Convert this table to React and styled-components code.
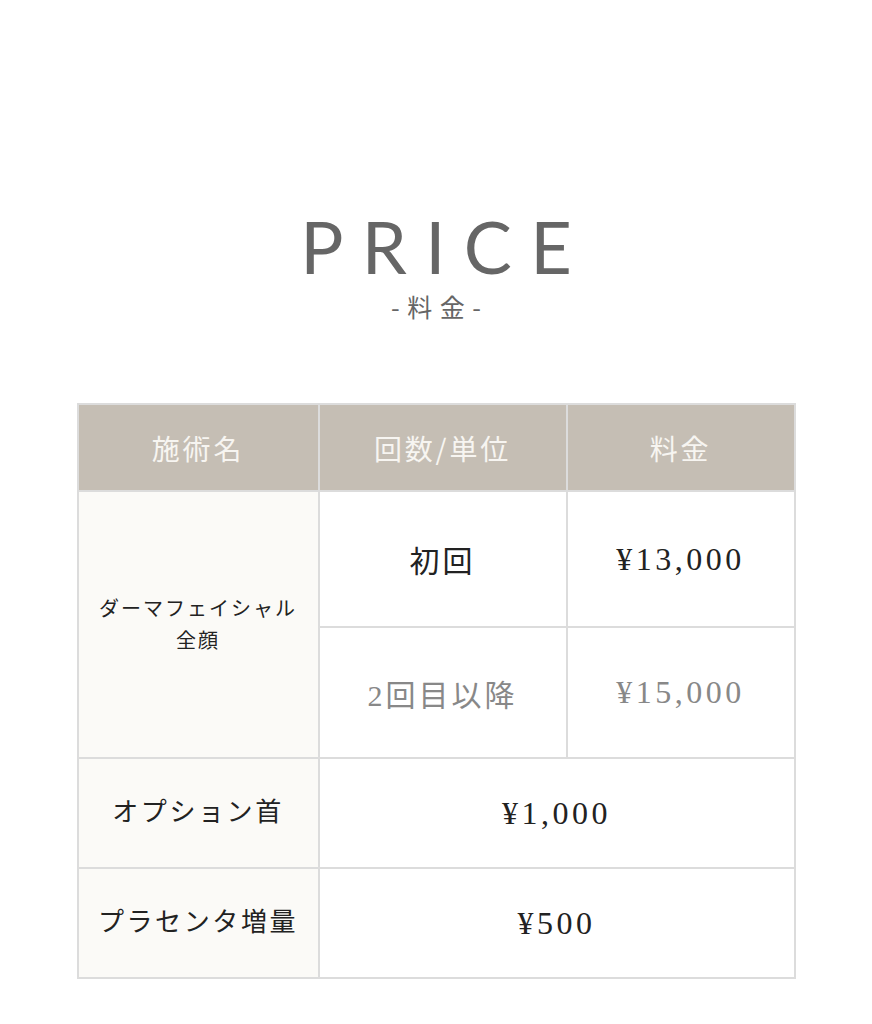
import React from 'react';
import styled, { createGlobalStyle } from 'styled-components';

const GlobalStyle = createGlobalStyle`
  html, body {
    margin: 0;
    padding: 0;
    background: #fff;
  }
  body {
    font-family: "Liberation Serif", "Noto Sans CJK JP", serif;
  }
`;

const rows = [
  { name: ['ダーマフェイシャル', '全顔'], prices: [
    { count: '初回', price: '¥13,000' },
    { count: '2回目以降', price: '¥15,000', muted: true },
  ] },
];

const options = [
  { name: 'オプション首', price: '¥1,000' },
  { name: 'プラセンタ増量', price: '¥500' },
];

export default function App() {
  return (
    <Page>
      <GlobalStyle />
      <Heading>
        <Title>PRICE</Title>
        <Sub>-料金-</Sub>
      </Heading>
      <PriceTable>
        <colgroup>
          <col style={{ width: 241 }} />
          <col style={{ width: 248 }} />
          <col style={{ width: 228 }} />
        </colgroup>
        <thead>
          <tr>
            <Th>施術名</Th>
            <Th>回数/単位</Th>
            <Th>料金</Th>
          </tr>
        </thead>
        <tbody>
          {rows.map((r) =>
            r.prices.map((p, i) => (
              <Row key={r.name[0] + i} $h={i === 0 ? 136 : 131}>
                {i === 0 && (
                  <NameCell rowSpan={r.prices.length} $small>
                    {r.name.map((n) => (
                      <div key={n}>{n}</div>
                    ))}
                  </NameCell>
                )}
                <Td $muted={p.muted}>{p.count}</Td>
                <Td $muted={p.muted} $num>{p.price}</Td>
              </Row>
            ))
          )}
          {options.map((o) => (
            <Row key={o.name} $h={110}>
              <NameCell>{o.name}</NameCell>
              <Td colSpan={2} $num>{o.price}</Td>
            </Row>
          ))}
        </tbody>
      </PriceTable>
    </Page>
  );
}

const Page = styled.div`
  width: 872px;
  min-height: 1024px;
  padding-top: 203px;
  box-sizing: border-box;
  display: flex;
  flex-direction: column;
  align-items: center;
`;

const Heading = styled.div`
  display: flex;
  flex-direction: column;
  align-items: center;
  color: #666;
  margin-bottom: 80px;
`;

const Title = styled.h1`
  margin: 0;
  font-family: "Lato", "Liberation Sans", sans-serif;
  font-weight: 400;
  font-size: 72px;
  line-height: 86px;
  letter-spacing: 0.255em;
  padding-left: 0.255em;
`;

const Sub = styled.div`
  font-family: "Noto Sans CJK JP", sans-serif;
  font-size: 25px;
  line-height: 34px;
  letter-spacing: 0.3em;
  padding-left: 0.3em;
`;

const PriceTable = styled.table`
  width: 717px;
  border-collapse: collapse;
  table-layout: fixed;
  border: 2px solid #dcdcdc;
`;

const Th = styled.th`
  height: 85px;
  background: #c5beb4;
  color: #f7f5f1;
  font-family: "Noto Sans CJK JP", sans-serif;
  font-weight: 400;
  font-size: 28px;
  letter-spacing: 0.1em;
  border: 2px solid #dcdcdc;
  text-align: center;
  vertical-align: middle;
  padding: 0;
`;

const Row = styled.tr`
  height: ${(p) => p.$h}px;
`;

const Td = styled.td`
  border: 2px solid #dcdcdc;
  text-align: center;
  vertical-align: middle;
  padding: 0;
  font-size: ${(p) => (p.$num ? '32px' : '30px')};
  letter-spacing: ${(p) => (p.$num ? '0.11em' : '0.1em')};
  color: ${(p) => (p.$muted ? '#888' : '#222')};
  background: #fff;
`;

const NameCell = styled(Td)`
  background: #fbfaf7;
  font-size: ${(p) => (p.$small ? '20px' : '26px')};
  line-height: ${(p) => (p.$small ? '32px' : '36px')};
  letter-spacing: 0.1em;
  color: #222;
`;
